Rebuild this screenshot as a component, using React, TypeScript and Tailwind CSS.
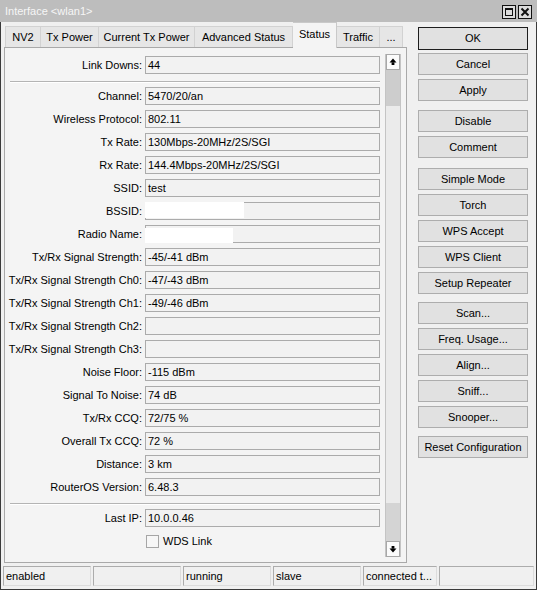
import React from 'react';

type Row = { label: string; value?: string; redact?: { w: number; top: number; h: number } };

const MAIN_ROWS: Row[] = [
  { label: 'Channel', value: '5470/20/an' },
  { label: 'Wireless Protocol', value: '802.11' },
  { label: 'Tx Rate', value: '130Mbps-20MHz/2S/SGI' },
  { label: 'Rx Rate', value: '144.4Mbps-20MHz/2S/SGI' },
  { label: 'SSID', value: 'test' },
  { label: 'BSSID', redact: { w: 99, top: -1, h: 16 } },
  { label: 'Radio Name', redact: { w: 88, top: 2, h: 15 } },
  { label: 'Tx/Rx Signal Strength', value: '-45/-41 dBm' },
  { label: 'Tx/Rx Signal Strength Ch0', value: '-47/-43 dBm' },
  { label: 'Tx/Rx Signal Strength Ch1', value: '-49/-46 dBm' },
  { label: 'Tx/Rx Signal Strength Ch2' },
  { label: 'Tx/Rx Signal Strength Ch3' },
  { label: 'Noise Floor', value: '-115 dBm' },
  { label: 'Signal To Noise', value: '74 dB' },
  { label: 'Tx/Rx CCQ', value: '72/75 %' },
  { label: 'Overall Tx CCQ', value: '72 %' },
  { label: 'Distance', value: '3 km' },
  { label: 'RouterOS Version', value: '6.48.3' },
];

const TABS = [
  { label: 'NV2', w: 'w-[36px]' },
  { label: 'Tx Power', w: 'w-[58px]' },
  { label: 'Current Tx Power', w: 'w-[96px]' },
  { label: 'Advanced Status', w: 'w-[98px]' },
  { label: 'Status', w: 'w-[44px]', active: true },
  { label: 'Traffic', w: 'w-[43px]' },
  { label: '...', w: 'w-[23px]' },
];

// button label + top margin (group gaps are larger)
const BUTTONS: { label: string; mt: string }[] = [
  { label: 'Cancel', mt: 'mt-[3px]' },
  { label: 'Apply', mt: 'mt-[4px]' },
  { label: 'Disable', mt: 'mt-[9px]' },
  { label: 'Comment', mt: 'mt-[4px]' },
  { label: 'Simple Mode', mt: 'mt-[10px]' },
  { label: 'Torch', mt: 'mt-[4px]' },
  { label: 'WPS Accept', mt: 'mt-[4px]' },
  { label: 'WPS Client', mt: 'mt-[4px]' },
  { label: 'Setup Repeater', mt: 'mt-[4px]' },
  { label: 'Scan...', mt: 'mt-[8px]' },
  { label: 'Freq. Usage...', mt: 'mt-[4px]' },
  { label: 'Align...', mt: 'mt-[4px]' },
  { label: 'Sniff...', mt: 'mt-[4px]' },
  { label: 'Snooper...', mt: 'mt-[4px]' },
  { label: 'Reset Configuration', mt: 'mt-[8px]' },
];

const STATUS = [
  { text: 'enabled', w: 'w-[88px]' },
  { text: '', w: 'w-[88px]' },
  { text: 'running', w: 'w-[88px]' },
  { text: 'slave', w: 'w-[88px]' },
  { text: 'connected t...', w: 'w-[74px]' },
  { text: '', w: 'w-[95px]' },
];

function Field({ row, className = '' }: { row: Row; className?: string }) {
  return (
    <div className={`flex items-center h-[18px] ${className}`}>
      <div className="w-[137px] text-right whitespace-nowrap">{row.label}:</div>
      <div className="relative ml-[3px] w-[235px] h-[18px] border border-[#ababab] bg-[#f2f2f2] pl-[2px] flex items-center whitespace-nowrap">
        {row.value}
        {row.redact && (
          <span
            className="absolute left-[-1px] bg-white"
            style={{ width: row.redact.w, top: row.redact.top, height: row.redact.h }}
          />
        )}
      </div>
    </div>
  );
}

function Separator({ className = '' }: { className?: string }) {
  return <div className={`ml-[5px] w-[370px] h-[2px] border-t border-[#b4b4b4] border-b border-b-white ${className}`} />;
}

function Arrow({ down }: { down?: boolean }) {
  return (
    <div className="h-[16px] border border-[#a8a8a8] bg-[#fbfbfb] flex items-center justify-center">
      <svg width="8" height="8" viewBox="0 0 8 8" className={down ? 'rotate-180' : ''}>
        <path d="M4 0.5 L7.5 4.5 L0.5 4.5 Z" fill="#000" />
        <rect x="2.6" y="4.3" width="2.8" height="2.7" fill="#000" />
      </svg>
    </div>
  );
}

function Btn({ label, mt }: { label: string; mt: string }) {
  return (
    <div className={`${mt} h-[22px] border border-[#adadad] bg-[#e1e1e1] flex items-center justify-center whitespace-nowrap`}>
      {label}
    </div>
  );
}

export default function App() {
  return (
    <div className="w-[537px] h-[590px] overflow-hidden bg-[#f0f0f0] text-[11px] text-black font-['Liberation_Sans',Arial,sans-serif] leading-none select-none">
      {/* title bar */}
      <div className="h-[22px] bg-[#bdbdbd] flex items-center pl-[5px] pr-[5px]">
        <span className="text-[#f6f6f6] text-[11px]">Interface &lt;wlan1&gt;</span>
        <div className="ml-auto flex gap-[2px] mt-[1px]">
          <div className="w-[14px] h-[14px] border border-[#111] bg-[#dcdcdc] flex items-center justify-center">
            <div className="w-[8px] h-[8px] border border-[#111] border-t-2" />
          </div>
          <div className="w-[14px] h-[14px] border border-[#111] bg-[#dcdcdc] flex items-center justify-center">
            <svg width="10" height="10" viewBox="0 0 10 10">
              <path d="M1.5 1.5 L8.5 8.5 M8.5 1.5 L1.5 8.5" stroke="#111" strokeWidth="2" />
            </svg>
          </div>
        </div>
      </div>

      {/* window body */}
      <div className="h-[568px] border-x border-b border-[#3a3a3a] flex flex-col">
        <div className="h-[544px] flex pl-[3px]">
          {/* tabs + panel */}
          <div className="w-[403px] flex flex-col">
            <div className="h-[25px] flex items-end pl-[1px]">
              {TABS.map((t, i) =>
                t.active ? (
                  <div
                    key={t.label}
                    className={`${t.w} relative z-10 h-[26px] -mb-px bg-[#f4f4f4] border-t border-r border-[#c9c9c9] flex items-center justify-center pb-[3px]`}
                  >
                    {t.label}
                  </div>
                ) : (
                  <div
                    key={t.label}
                    className={`${t.w} h-[21px] bg-[#e6e6e6] border-t border-r border-[#d2d2d2] ${i === 0 ? 'border-l' : ''} flex items-center justify-center`}
                  >
                    {t.label}
                  </div>
                )
              )}
            </div>
            <div className="h-[516px] border border-[#a9a9a9] bg-[#f4f4f4] flex">
              <div className="flex flex-col pt-[8px]">
                <Field row={{ label: 'Link Downs', value: '44' }} />
                <Separator className="mt-[7px]" />
                {MAIN_ROWS.map((r, i) => (
                  <Field key={r.label} row={r} className={i === 0 ? 'mt-[4px]' : 'mt-[5px]'} />
                ))}
                <Separator className="mt-[7px]" />
                <Field row={{ label: 'Last IP', value: '10.0.0.46' }} className="mt-[4px]" />
                <div className="flex items-center mt-[8px] ml-[141px]">
                  <div className="w-[13px] h-[13px] border border-[#a6a6a6] bg-[#f7f7f7]" />
                  <span className="ml-[4px]">WDS Link</span>
                </div>
              </div>
              <div className="ml-[5px] mt-[6px] mb-[5px] w-[16px] flex flex-col border-x border-[#c4c4c4] bg-[#ebebeb]">
                <Arrow />
                <div className="h-[36px] bg-[#cdcdcd]" />
                <div className="flex-1" />
                <div className="h-[38px] bg-[#d4d4d4]" />
                <Arrow down />
              </div>
            </div>
          </div>

          {/* right button column */}
          <div className="ml-[11px] w-[110px] pt-[5px] flex flex-col">
            <div className="h-[23px] border border-[#1e1e1e] bg-[#e1e1e1] flex items-center justify-center">OK</div>
            {BUTTONS.map((b) => (
              <Btn key={b.label} label={b.label} mt={b.mt} />
            ))}
          </div>
        </div>

        {/* status bar */}
        <div className="h-[20px] flex gap-[2px] pl-[2px]">
          {STATUS.map((s, i) => (
            <div
              key={i}
              className={`${s.w} h-[20px] border border-[#acacac] border-r-[#dcdcdc] border-b-[#dcdcdc] flex items-center pl-[2px] whitespace-nowrap overflow-hidden`}
            >
              {s.text}
            </div>
          ))}
        </div>
      </div>
    </div>
  );
}
